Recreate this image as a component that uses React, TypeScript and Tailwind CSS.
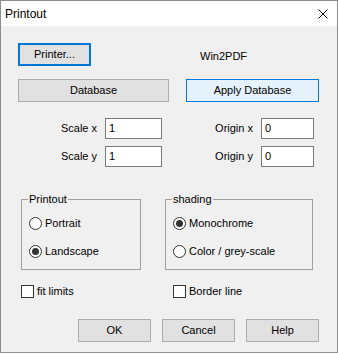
import React from "react";

const font = "font-['Liberation_Sans',Arial,sans-serif]";

function Btn({ label, w, variant = "normal" }: { label: string; w: string; variant?: "normal" | "focus" | "hover" }) {
  const cls =
    variant === "focus"
      ? "border-2 border-[#0078d7] bg-[#e1e1e1]"
      : variant === "hover"
      ? "border border-[#0078d7] bg-[#e5f1fb]"
      : "border border-[#adadad] bg-[#e1e1e1]";
  return (
    <div className={`${w} h-[23px] ${cls} flex items-center justify-center text-black`}>
      <span className="leading-[13px]">{label}</span>
    </div>
  );
}

function Radio({ label, checked }: { label: string; checked?: boolean }) {
  return (
    <div className="flex items-center h-[13px]">
      <div className="w-[13px] h-[13px] rounded-full border border-[#333333] bg-white flex items-center justify-center">
        {checked && <div className="w-[7px] h-[7px] rounded-full bg-[#333333]" />}
      </div>
      <span className="ml-[3px] leading-[13px]">{label}</span>
    </div>
  );
}

function Check({ label, w }: { label: string; w?: string }) {
  return (
    <div className={`flex items-center h-[13px] ${w ?? ""}`}>
      <div className="w-[13px] h-[13px] border border-[#333333] bg-white" />
      <span className="ml-[3px] leading-[13px]">{label}</span>
    </div>
  );
}

function Input({ value, w }: { value: string; w: string }) {
  return (
    <div className={`${w} h-[21px] border border-[#7a7a7a] bg-white flex items-center pl-[3px]`}>
      <span className="leading-[13px]">{value}</span>
    </div>
  );
}

function Group({ title, w, children }: { title: string; w: string; children: React.ReactNode }) {
  return (
    <div className={`relative ${w} h-[71px] border border-[#a0a0a0] pt-[17px] pl-[7px] flex flex-col gap-[15px]`}>
      <span className="absolute top-[-7px] left-[6px] px-[1px] bg-[#f0f0f0] leading-[13px]">{title}</span>
      {children}
    </div>
  );
}

export default function App() {
  return (
    <div className={`w-[338px] h-[353px] border border-[#8c8c8c] bg-[#f0f0f0] flex flex-col text-[11px] text-black ${font}`}>
      <div className="h-[25px] bg-white flex items-center justify-between pl-[4px] pr-[9px]">
        <span className="text-[12px] leading-[14px]">Printout</span>
        <svg width="10" height="10" viewBox="0 0 10 10">
          <path d="M0.5 0.5 L9.5 9.5 M9.5 0.5 L0.5 9.5" stroke="#000" strokeWidth="1" />
        </svg>
      </div>

      <div className="flex flex-col">
        <div className="mt-[17px] pl-[17px] flex items-start">
          <Btn label="Printer..." w="w-[73px]" variant="focus" />
          <span className="ml-[109px] mt-[7px] leading-[13px]">Win2PDF</span>
        </div>

        <div className="mt-[13px] pl-[17px] flex gap-[17px]">
          <Btn label="Database" w="w-[151px]" />
          <Btn label="Apply Database" w="w-[133px]" variant="hover" />
        </div>

        <div className="mt-[16px] flex items-center">
          <span className="w-[96px] text-right leading-[13px]">Scale x</span>
          <div className="ml-[8px]"><Input value="1" w="w-[57px]" /></div>
          <span className="w-[91px] text-right leading-[13px]">Origin x</span>
          <div className="ml-[8px]"><Input value="0" w="w-[53px]" /></div>
        </div>

        <div className="mt-[7px] flex items-center">
          <span className="w-[96px] text-right leading-[13px]">Scale y</span>
          <div className="ml-[8px]"><Input value="1" w="w-[57px]" /></div>
          <span className="w-[91px] text-right leading-[13px]">Origin y</span>
          <div className="ml-[8px]"><Input value="0" w="w-[53px]" /></div>
        </div>

        <div className="mt-[32px] pl-[20px] flex gap-[24px]">
          <Group title="Printout" w="w-[120px]">
            <Radio label="Portrait" />
            <Radio label="Landscape" checked />
          </Group>
          <Group title="shading" w="w-[148px]">
            <Radio label="Monochrome" checked />
            <Radio label="Color / grey-scale" />
          </Group>
        </div>

        <div className="mt-[15px] pl-[20px] flex">
          <Check label="fit limits" w="w-[152px]" />
          <Check label="Border line" />
        </div>

        <div className="mt-[21px] pl-[77px] flex gap-[11px]">
          <Btn label="OK" w="w-[73px]" />
          <Btn label="Cancel" w="w-[73px]" />
          <Btn label="Help" w="w-[73px]" />
        </div>
      </div>
    </div>
  );
}
